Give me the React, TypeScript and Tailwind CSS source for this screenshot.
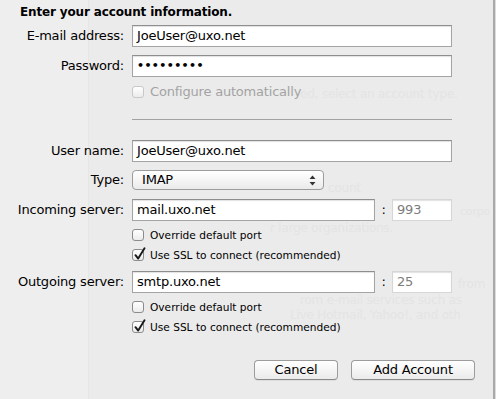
import React from 'react';

const font = { fontFamily: '"DejaVu Sans", "Noto Sans", sans-serif' };

const Row: React.FC<{ label?: string; className?: string; children: React.ReactNode }> = ({ label, className = '', children }) => (
  <div className={`flex items-center ${className}`}>
    <div className="w-[124px] text-right whitespace-nowrap">{label}</div>
    <div className="ml-2 flex items-center">{children}</div>
  </div>
);

const TextBox: React.FC<{ value: string; width: string; muted?: boolean }> = ({ value, width, muted }) => (
  <div
    className={`h-[22px] ${width} flex items-center pl-[4px] bg-white border ${
      muted ? 'border-[#d6d6d6] text-[#7c7c7c]' : 'border-[#a4a4a4] border-t-[#8e8e8e]'
    } shadow-[inset_0_1px_1px_rgba(0,0,0,0.12)]`}
  >
    {value}
  </div>
);

const Check: React.FC<{ checked?: boolean; disabled?: boolean; small?: boolean; label: string }> = ({ checked, disabled, small, label }) => (
  <div className={`flex items-center h-4 ${disabled ? 'text-[#a3a3a3]' : ''}`}>
    <div
      className={`relative w-3 h-3 rounded-[3px] border bg-gradient-to-b from-white to-[#ececec] ${
        disabled ? 'border-[#c8c8c8]' : 'border-[#8c8c8c]'
      }`}
    >
      {checked && (
        <svg className="absolute left-[1px] -top-[3px]" width="12" height="14" viewBox="0 0 12 14">
          <path d="M1.5 8.2 L4.2 11.6 L10.5 1.2" fill="none" stroke="#1a1a1a" strokeWidth="1.9" strokeLinecap="round" strokeLinejoin="round" />
        </svg>
      )}
    </div>
    <span className={`ml-[6px] ${small ? 'text-[10.6px] tracking-normal' : ''}`}>{label}</span>
  </div>
);

const Button: React.FC<{ label: string; width: string }> = ({ label, width }) => (
  <div
    className={`${width} h-5 rounded-[4px] border border-[#9c9c9c] border-b-[#8a8a8a] bg-gradient-to-b from-white to-[#ebebeb] flex items-center justify-center shadow-[0_1px_0_rgba(0,0,0,0.06)]`}
  >
    {label}
  </div>
);

export default function App() {
  return (
    <div className="relative w-[496px] h-[399px] overflow-hidden bg-[#ebebeb] text-[13px] leading-4 tracking-[-0.2px] text-black" style={font}>
      {/* backdrop behind the sheet */}
      <div className="absolute inset-0 flex">
        <div className="w-[89px] bg-[#eeeeee] border-r border-[#e6e6e6]" />
        <div className="flex-1" />
        <div className="w-[2px] bg-[#a9a9a9]" />
        <div className="w-[1px] bg-[#dcdcdc]" />
      </div>
      <div className="absolute left-0 top-0 w-[493px] h-full overflow-hidden text-[#e4e4e4] text-[12px] pointer-events-none">
        <div className="absolute left-[300px] top-[86px] whitespace-nowrap">ed, select an account type.</div>
        <div className="absolute left-[328px] top-[180px] whitespace-nowrap">count</div>
        <div className="absolute left-[460px] top-[204px] whitespace-nowrap text-[11px]">corpo</div>
        <div className="absolute left-[270px] top-[220px] whitespace-nowrap">r large organizations.</div>
        <div className="absolute left-[458px] top-[276px] whitespace-nowrap">from</div>
        <div className="absolute left-[300px] top-[292px] whitespace-nowrap">rom e-mail services such as</div>
        <div className="absolute left-[290px] top-[307px] whitespace-nowrap">Live Hotmail, Yahoo!, and oth</div>
      </div>

      <div className="relative">
        <div className="pl-5 pt-[4px] font-bold text-[12px] tracking-[-0.15px]">Enter your account information.</div>

        <Row label="E-mail address:" className="mt-[5px]">
          <TextBox value="JoeUser@uxo.net" width="w-[320px]" />
        </Row>
        <Row label="Password:" className="mt-2">
          <div className="h-[22px] w-[320px] flex items-center pl-[4px] bg-white border border-[#a4a4a4] border-t-[#8e8e8e] shadow-[inset_0_1px_1px_rgba(0,0,0,0.12)]">
            <span className="text-[11px] tracking-[0.4px] font-bold">•••••••••</span>
          </div>
        </Row>
        <Row className="mt-[7px]">
          <Check disabled label="Configure automatically" />
        </Row>

        <div className="ml-[132px] mt-[19px] w-[320px] h-px bg-[#a2a2a2]" />

        <Row label="User name:" className="mt-5">
          <TextBox value="JoeUser@uxo.net" width="w-[320px]" />
        </Row>
        <Row label="Type:" className="mt-2">
          <div className="w-[192px] h-5 rounded-[4px] border border-[#9c9c9c] bg-gradient-to-b from-white to-[#ebebeb] flex items-center justify-between pl-[9px] pr-[7px]">
            <span>IMAP</span>
            <svg width="7" height="11" viewBox="0 0 7 11">
              <path d="M3.5 0.5 L6.5 4 L0.5 4 Z" fill="#333" />
              <path d="M3.5 10.5 L6.5 7 L0.5 7 Z" fill="#333" />
            </svg>
          </div>
        </Row>
        <Row label="Incoming server:" className="mt-[9px]">
          <TextBox value="mail.uxo.net" width="w-[243px]" />
          <div className="w-[17px] text-center">:</div>
          <TextBox value="993" width="w-[60px]" muted />
        </Row>
        <Row className="mt-[6px]">
          <Check small label="Override default port" />
        </Row>
        <Row className="mt-1">
          <Check small checked label="Use SSL to connect (recommended)" />
        </Row>

        <Row label="Outgoing server:" className="mt-2">
          <TextBox value="smtp.uxo.net" width="w-[243px]" />
          <div className="w-[17px] text-center">:</div>
          <TextBox value="25" width="w-[60px]" muted />
        </Row>
        <Row className="mt-[6px]">
          <Check small label="Override default port" />
        </Row>
        <Row className="mt-1">
          <Check small checked label="Use SSL to connect (recommended)" />
        </Row>

        <div className="flex mt-[25px] pl-[254px] gap-[13px]">
          <Button label="Cancel" width="w-[84px]" />
          <Button label="Add Account" width="w-[124px]" />
        </div>
      </div>
    </div>
  );
}
